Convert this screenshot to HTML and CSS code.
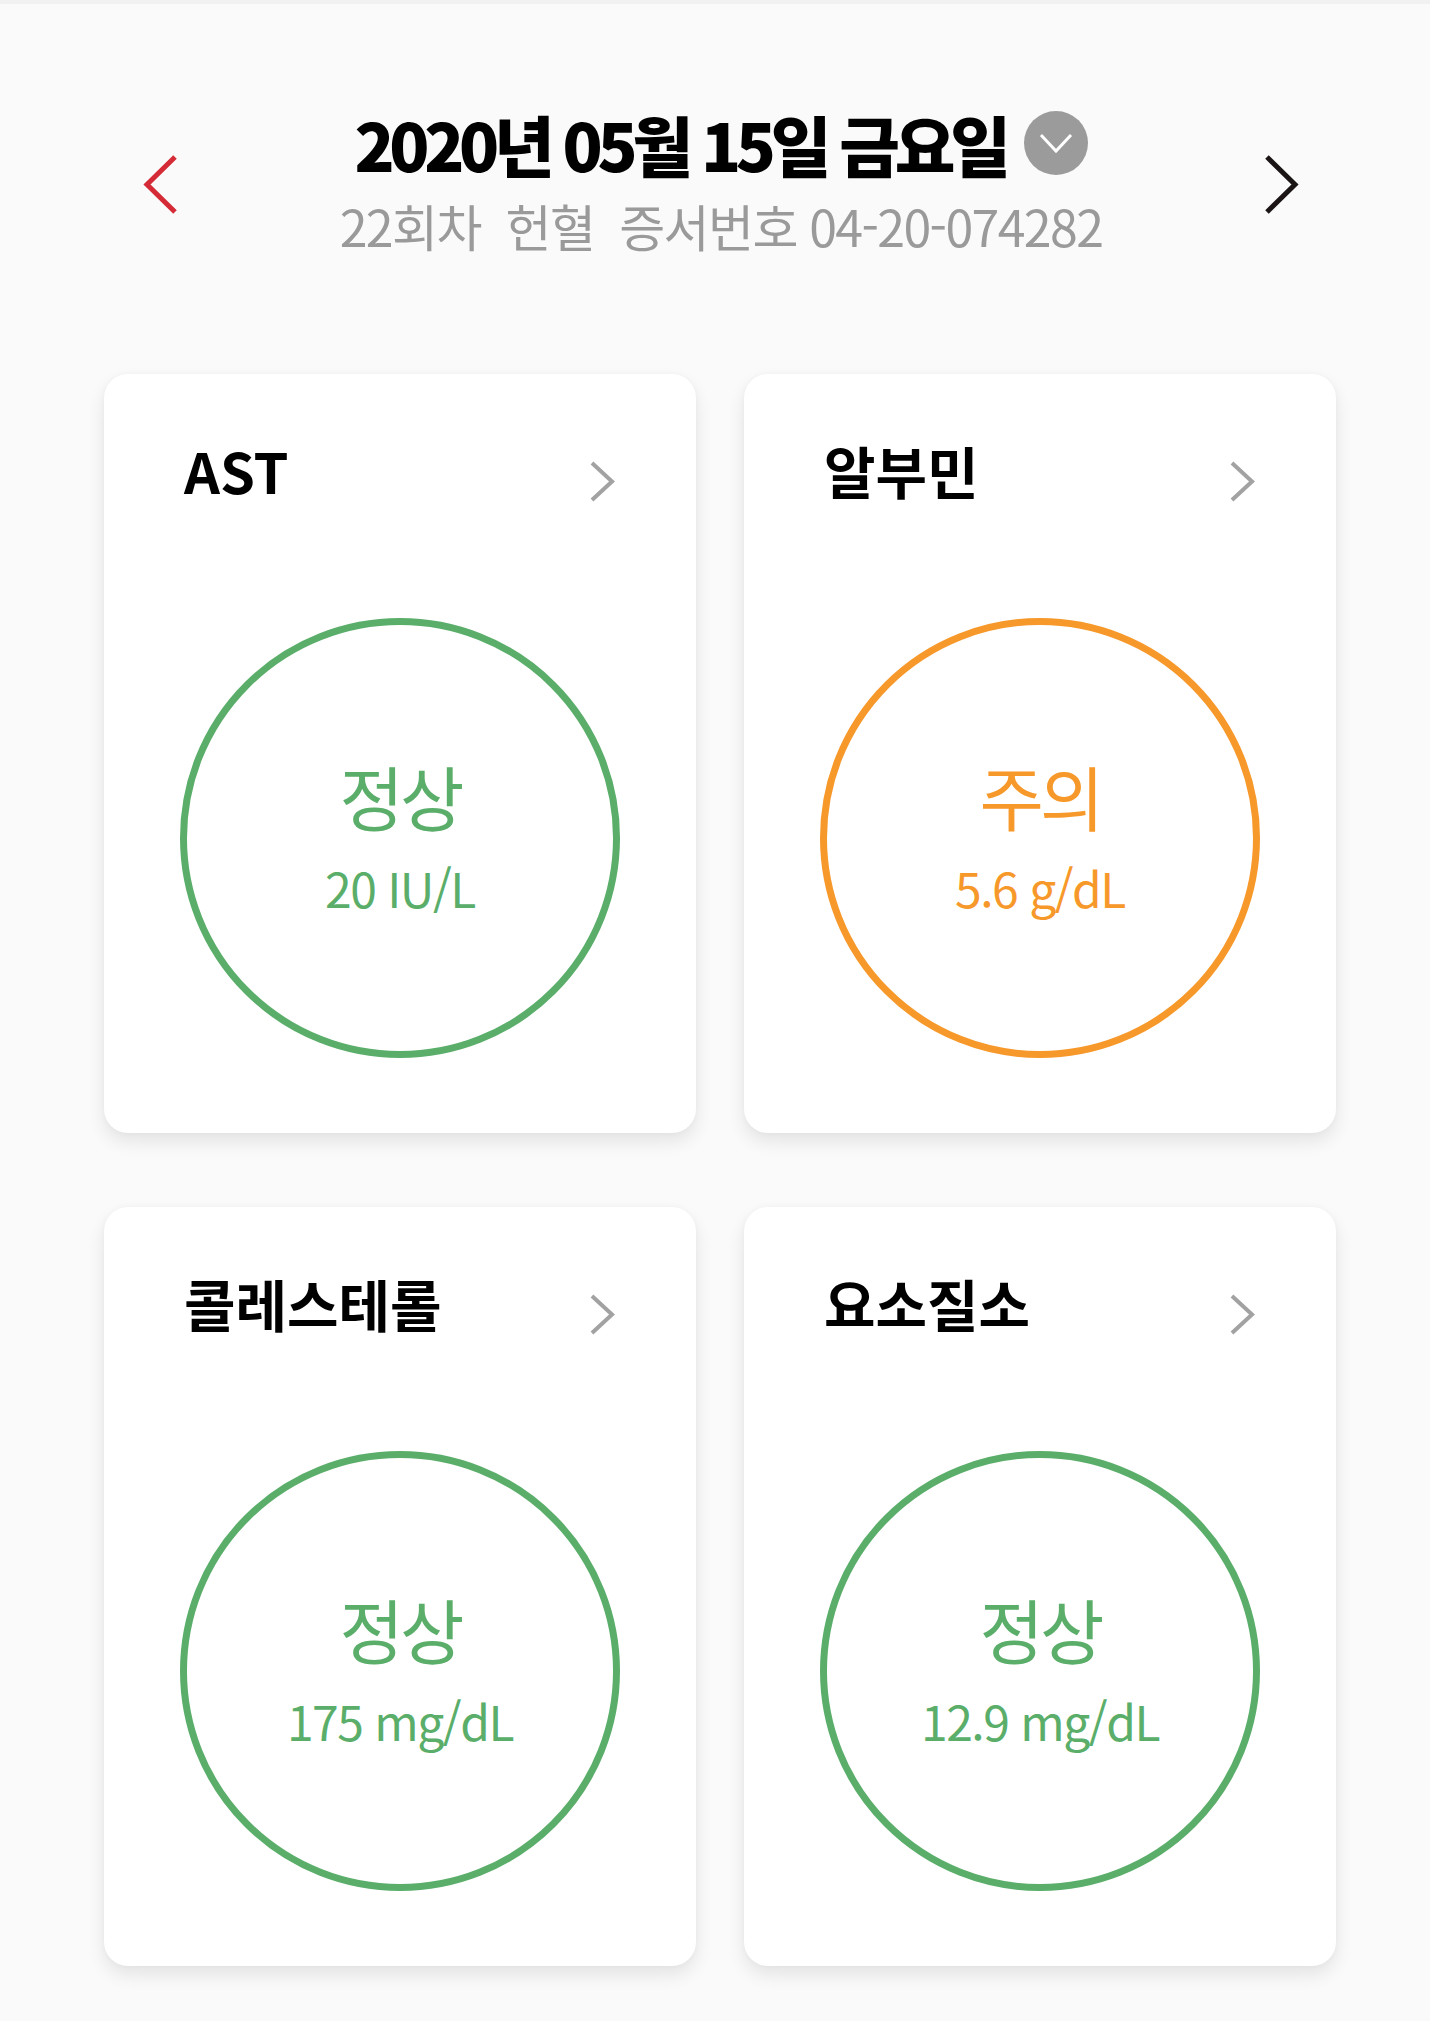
FILE: index.html
```html
<!DOCTYPE html>
<html lang="ko">
<head>
    <meta charset="UTF-8">
    <title>헌혈 검사결과</title>
    <link rel="stylesheet" href="styles.css">
</head>
<body>
    <header class="date-nav">
        <button class="nav-btn prev" aria-label="이전">
            <svg width="34" height="59" viewBox="0 0 34 59"><polyline points="32,2 4,29.5 32,57" fill="none" stroke="#d52b36" stroke-width="5"/></svg>
        </button>
        <div class="date-info">
            <h1 class="date-title">
                <span class="date-text">2020년 05월 15일 금요일</span>
                <span class="date-toggle">
                    <svg width="64" height="64" viewBox="0 0 64 64"><polyline points="17,24 32,40 47,24" fill="none" stroke="#fff" stroke-width="3"/></svg>
                </span>
            </h1>
            <p class="date-sub">22회차  헌혈  증서번호 04-20-074282</p>
        </div>
        <button class="nav-btn next" aria-label="다음">
            <svg width="34" height="59" viewBox="0 0 34 59"><polyline points="2,2 30,29.5 2,57" fill="none" stroke="#1c1515" stroke-width="5"/></svg>
        </button>
    </header>

    <main class="result-grid">
        <section class="result-card">
            <div class="card-head">
                <h2 class="card-title">AST</h2>
                <svg class="card-more" width="25" height="41" viewBox="0 0 25 41"><polyline points="2,2 22,20.5 2,39" fill="none" stroke="#a2a2a2" stroke-width="4"/></svg>
            </div>
            <div class="gauge normal">
                <strong class="gauge-label">정상</strong>
                <span class="gauge-value">20 IU/L</span>
            </div>
        </section>

        <section class="result-card">
            <div class="card-head">
                <h2 class="card-title">알부민</h2>
                <svg class="card-more" width="25" height="41" viewBox="0 0 25 41"><polyline points="2,2 22,20.5 2,39" fill="none" stroke="#a2a2a2" stroke-width="4"/></svg>
            </div>
            <div class="gauge caution">
                <strong class="gauge-label">주의</strong>
                <span class="gauge-value">5.6 g/dL</span>
            </div>
        </section>

        <section class="result-card">
            <div class="card-head">
                <h2 class="card-title">콜레스테롤</h2>
                <svg class="card-more" width="25" height="41" viewBox="0 0 25 41"><polyline points="2,2 22,20.5 2,39" fill="none" stroke="#a2a2a2" stroke-width="4"/></svg>
            </div>
            <div class="gauge normal">
                <strong class="gauge-label">정상</strong>
                <span class="gauge-value">175 mg/dL</span>
            </div>
        </section>

        <section class="result-card">
            <div class="card-head">
                <h2 class="card-title">요소질소</h2>
                <svg class="card-more" width="25" height="41" viewBox="0 0 25 41"><polyline points="2,2 22,20.5 2,39" fill="none" stroke="#a2a2a2" stroke-width="4"/></svg>
            </div>
            <div class="gauge normal">
                <strong class="gauge-label">정상</strong>
                <span class="gauge-value">12.9 mg/dL</span>
            </div>
        </section>
    </main>
</body>
</html>
```

FILE: styles.css
```css
body { margin: 0; background: #fafafa; border-top: 4px solid #f1f1f1; font-family: "Noto Sans CJK KR", "Noto Sans", sans-serif; color: #000; }

.date-nav { display: flex; align-items: center; padding: 99px 131px 0 143px; }
.nav-btn { border: 0; background: none; padding: 0; width: 34px; height: 59px; margin-top: 5px; }
.nav-btn svg { display: block; }
.date-info { flex: 1; text-align: center; }
.date-title { display: flex; justify-content: center; align-items: center; margin: 0; font-size: 66px; line-height: 80px; font-weight: 900; letter-spacing: -5.3px; }
.date-toggle { display: block; width: 64px; height: 64px; margin-left: 18px; border-radius: 50%; background: #9b9b9b; }
.date-toggle svg { display: block; }
.date-sub { margin: 6px 0 0; font-size: 50px; line-height: 72px; color: #9a9a9a; letter-spacing: -1.6px; white-space: pre; }

.result-grid { display: grid; grid-template-columns: repeat(2, 592px); column-gap: 48px; row-gap: 74px; padding: 113px 94px 55px 104px; }
.result-card { display: flex; flex-direction: column; background: #fff; border-radius: 24px; padding: 64px 0 75px; box-shadow: 0 9px 18px rgba(0,0,0,0.09), 0 0 6px rgba(0,0,0,0.03); }
.card-head { display: flex; justify-content: space-between; align-items: center; height: 64px; padding: 0 81px 0 80px; }
.card-title { margin: 0; font-size: 56px; line-height: 64px; font-weight: 700; }
.card-more { margin-top: 22px; }

.gauge { box-sizing: border-box; width: 440px; height: 440px; margin: 116px auto 0; border: 7px solid; border-radius: 50%; display: flex; flex-direction: column; justify-content: center; align-items: center; padding-bottom: 4px; }
.gauge.normal { color: #5aae6a; }
.gauge.caution { color: #f7982a; }
.gauge-label { font-size: 70px; line-height: 80px; font-weight: 400; letter-spacing: -4px; }
.gauge-value { margin-top: 22px; font-size: 48px; line-height: 58px; letter-spacing: -1.5px; }
```
